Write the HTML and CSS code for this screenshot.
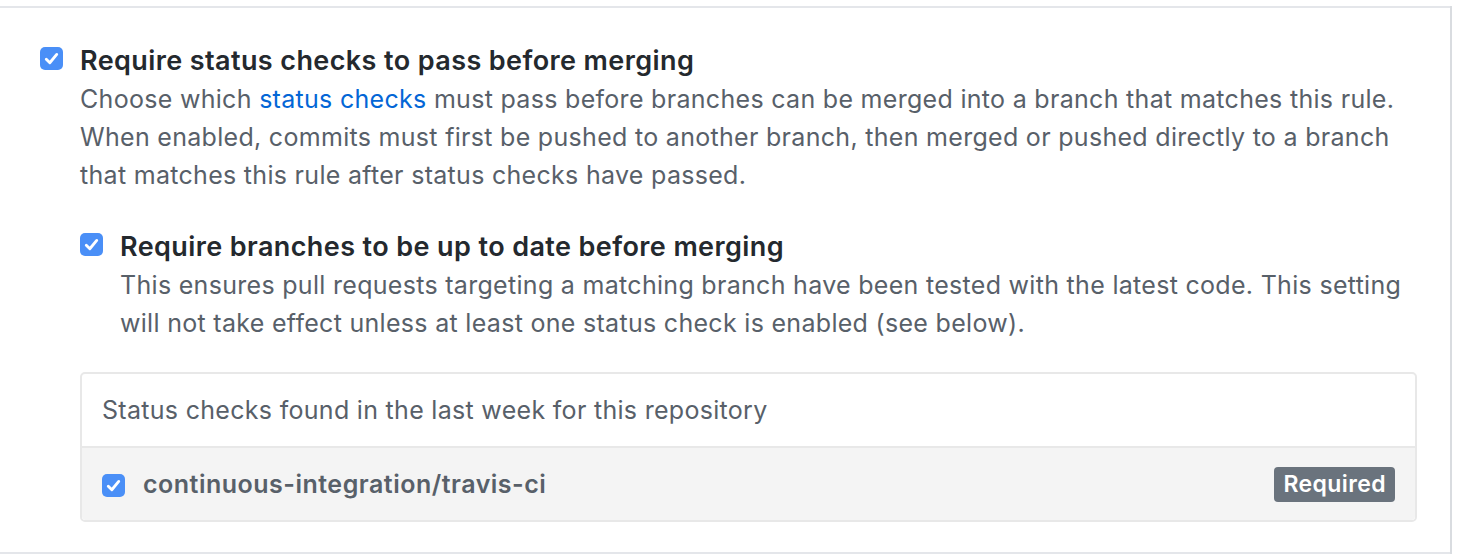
FILE: index.html
```html
<!DOCTYPE html>
<html lang="en">
  <head>
    <meta charset="UTF-8" />
    <meta name="viewport" content="width=device-width, initial-scale=1.0" />
    <title>Branch protection rule</title>
    <link rel="stylesheet" href="styles.css">
  </head>
  <body>
    <div class="panel">
      <div class="rule">
        <div class="option">
          <span class="check"><svg viewBox="0 0 16 16"><path d="M3.6 8.6l3 3L12.4 4.6" /></svg></span>
          <div class="option-body">
            <div class="option-title">Require status checks to pass before merging</div>
            <p class="option-note">
              Choose which <a href="#">status checks</a> must pass before branches can be merged into a branch that matches this rule.
              When enabled, commits must first be pushed to another branch, then merged or pushed directly to a branch
              that matches this rule after status checks have passed.
            </p>

            <div class="option option-sub">
              <span class="check"><svg viewBox="0 0 16 16"><path d="M3.6 8.6l3 3L12.4 4.6" /></svg></span>
              <div class="option-body">
                <div class="option-title">Require branches to be up to date before merging</div>
                <p class="option-note">
                  This ensures pull requests targeting a matching branch have been tested with the latest code. This setting
                  will not take effect unless at least one status check is enabled (see below).
                </p>
              </div>
            </div>

            <div class="checks">
              <div class="checks-head">Status checks found in the last week for this repository</div>
              <div class="checks-row">
                <span class="check check-sm"><svg viewBox="0 0 16 16"><path d="M3.6 8.6l3 3L12.4 4.6" /></svg></span>
                <span class="checks-name">continuous-integration/travis-ci</span>
                <span class="label">Required</span>
              </div>
            </div>
          </div>
        </div>
      </div>
    </div>
  </body>
</html>
```

FILE: styles.css
```css
body {
  margin: 0;
  background-color: #fff;
  font-family: Inter, "Liberation Sans", Arial, sans-serif;
  color: #24292e;
}
.panel {
  width: 1450px;
  height: 554px;
  border-right: 2px solid #d9dce0;
}
.rule {
  margin-top: 6px;
  border-top: 2px solid #e4e6ea;
  border-bottom: 2px solid #e4e6ea;
  padding: 34px 0 30px 40px;
}
.option {
  display: flex;
  align-items: flex-start;
}
.option-body {
  flex: 1;
}
.check {
  flex: none;
  width: 23px;
  height: 23px;
  margin: 5px 17px 0 0;
  border-radius: 5px;
  background-color: #4a8ff7;
  display: flex;
  justify-content: center;
  align-items: center;
}
.check svg {
  width: 19px;
  height: 19px;
  fill: none;
  stroke: #fff;
  stroke-width: 2.4;
  stroke-linecap: round;
  stroke-linejoin: round;
}
.option-title {
  font-size: 27px;
  font-weight: 600;
  letter-spacing: 0.4px;
  line-height: 38px;
}
.option-note {
  margin: 0;
  padding-right: 30px;
  font-size: 25px;
  letter-spacing: 0.3px;
  line-height: 38px;
  color: #586069;
}
.option-note a {
  color: #0366d6;
  text-decoration: none;
}
.option-sub {
  margin-top: 34px;
}
.checks {
  margin-top: 30px;
  margin-right: 33px;
  border: 2px solid #e8e8e8;
  border-radius: 5px;
}
.checks-head {
  height: 72px;
  padding-left: 20px;
  display: flex;
  align-items: center;
  font-size: 25px;
  letter-spacing: 0.3px;
  color: #586069;
  border-bottom: 2px solid #e8e8e8;
}
.checks-row {
  height: 72px;
  padding: 0 20px;
  display: flex;
  align-items: center;
  background-color: #f4f4f4;
  border-radius: 0 0 4px 4px;
}
.check-sm {
  margin: 3px 18px 0 0;
}
.checks-name {
  flex: 1;
  font-size: 25px;
  font-weight: 600;
  letter-spacing: 0.5px;
  color: #586069;
}
.label {
  padding: 0 9px;
  height: 35px;
  line-height: 35px;
  border-radius: 4px;
  background-color: #6a737d;
  color: #fff;
  font-size: 23px;
  font-weight: 600;
  letter-spacing: 0.4px;
}
```
